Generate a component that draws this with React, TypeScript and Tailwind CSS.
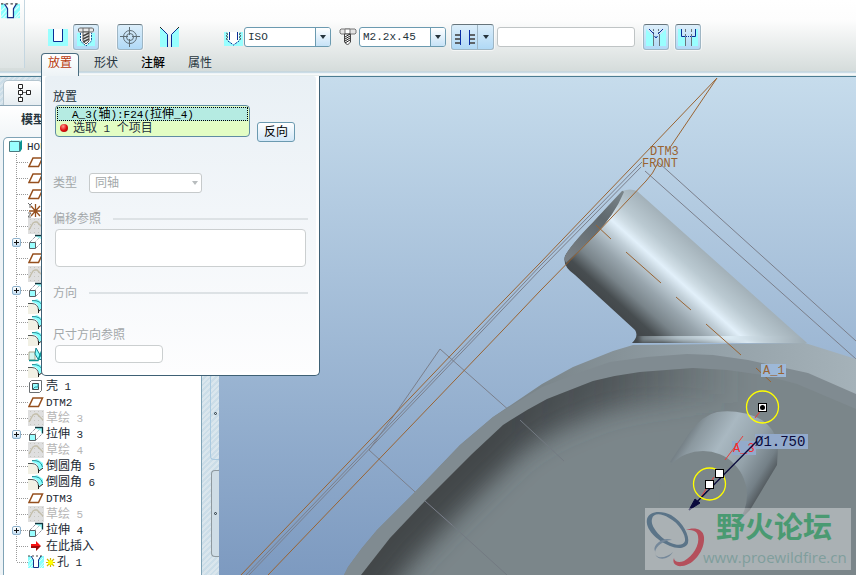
import type { ReactNode } from 'react';

type IconName = 'datum' | 'csys' | 'sketch' | 'extrude' | 'round' | 'draft' | 'shell' | 'insert' | 'hole';

type TreeItem = {
  icon: IconName;
  label?: string;
  expandable?: boolean;
  dimmed?: boolean;
  isNew?: boolean;
};

const treeItems: TreeItem[] = [
  { icon: 'datum' },
  { icon: 'datum' },
  { icon: 'datum' },
  { icon: 'csys' },
  { icon: 'sketch' },
  { icon: 'extrude', expandable: true },
  { icon: 'datum' },
  { icon: 'sketch' },
  { icon: 'extrude', expandable: true },
  { icon: 'round' },
  { icon: 'round' },
  { icon: 'round' },
  { icon: 'draft' },
  { icon: 'round' },
  { icon: 'shell', label: '壳 1' },
  { icon: 'datum', label: 'DTM2' },
  { icon: 'sketch', label: '草绘 3', dimmed: true },
  { icon: 'extrude', label: '拉伸 3', expandable: true },
  { icon: 'sketch', label: '草绘 4', dimmed: true },
  { icon: 'round', label: '倒圆角 5' },
  { icon: 'round', label: '倒圆角 6' },
  { icon: 'datum', label: 'DTM3' },
  { icon: 'sketch', label: '草绘 5', dimmed: true },
  { icon: 'extrude', label: '拉伸 4', expandable: true },
  { icon: 'insert', label: '在此插入' },
  { icon: 'hole', label: '孔 1', isNew: true },
];

const treeIcons: Record<IconName, ReactNode> = {
  datum: <path d="M5 4h9.500l-4 8.500H1z" fill="#fff" stroke="#96501e" strokeWidth="1.500" />,
  csys: (
    <>
      <path d="M7.500 2v13M1 9h14M3 4l9 10M12 4L3 14" stroke="#96501e" strokeWidth="1.300" />
      <path d="M0 1l2 2 2-2M2 3v3M0 11h3l-3 4h3" fill="none" stroke="#6b6b6b" />
    </>
  ),
  sketch: (
    <>
      <path d="M0 0h16v16H0z" fill="#dfdfdf" />
      <path d="M2 1.500h14M2 6.500h14M2 10.500h14M2 14.500h14" stroke="#c6c6c0" strokeDasharray="1 3" />
      <path d="M1 12l4-7 2-1h2l3 3 3 3" fill="none" stroke="#c2bda9" strokeWidth="1.300" />
    </>
  ),
  extrude: (
    <>
      <path d="M7 2h7v7l-1-4-4-2z" fill="#9ff" />
      <path d="M2 8L8 2M8 14l6-6" stroke="#667" strokeDasharray="1 1" />
      <path d="M7 1.500h7.500v6" fill="none" stroke="#12343c" strokeWidth="1.300" />
      <path d="M6 9l7-7" stroke="#9aa" strokeDasharray="1 1" />
      <path d="M1.500 8.500h6v6h-6z" fill="#9ff" stroke="#586064" />
    </>
  ),
  round: (
    <>
      <path d="M0 6h4l5 3 2 7H0z" fill="#f1f0e4" />
      <path d="M4 3l5-2 6 4v5l-4 2-2-6-5-2z" fill="#8ff" />
      <path d="M4 2.500Q13 2 14.500 9" fill="none" stroke="#2a8c96" />
      <path d="M0 5.500h4Q10 6 10.500 12" fill="none" stroke="#4f5555" />
      <path d="M10.500 11v4M11 13l4-3" stroke="#222" />
    </>
  ),
  draft: (
    <>
      <path d="M1 6h6v8H1z" fill="#d4f5ef" stroke="#aaa68d" />
      <path d="M8 2l7 12-5-1-3-5z" fill="#8ff" stroke="#17808c" />
      <path d="M1 14.500h9L14 4" fill="none" stroke="#0a9191" strokeWidth="1.400" />
    </>
  ),
  shell: (
    <>
      <path d="M1.500 4.500l2-2h10v10l-2 2h-10z" fill="#fff" stroke="#6a6f72" />
      <path d="M4.500 5.500h6v6h-6z" fill="#9ff" stroke="#43484b" />
      <path d="M5 11l2-2h3V6" fill="none" stroke="#2a9aa6" />
    </>
  ),
  insert: (
    <>
      <path d="M3 6h5V3l5 5H3z" fill="#f81414" />
      <path d="M3 8h10l-5 5v-3H3z" fill="#a00808" />
    </>
  ),
  hole: <HoleShape />,
};

function HoleShape() {
  return (
    <>
      <path d="M0 2h16v12H0z" fill="#8ff" />
      <path d="M0 8l5-5M0 13l5-6M2 14l3-3M11 14l5-6M11 8l4-4M13 14l3-3" stroke="#d8ffff" />
      <path d="M3 2h10l-3 4v8H6V6z" fill="#fff" />
      <path d="M3 2l2.500 4v7.500h5V6L13 2" fill="none" stroke="#1b2f86" />
      <path d="M0 2h16" stroke="#444" strokeDasharray="2 2" />
    </>
  );
}

/* Latin runs use a smaller fixed-width face than the Chinese ones */
function Mixed({ text }: { text: string }) {
  const runs = text.match(/[\u4e00-\u9fff]+|[^\u4e00-\u9fff]+/g) ?? [];
  return (
    <span className="whitespace-pre">
      {runs.map((run, index) =>
        /[\u4e00-\u9fff]/.test(run) ? (
          <span key={index}>{run}</span>
        ) : (
          <span key={index} className="font-['Liberation_Mono',monospace] text-[11px]">{run}</span>
        )
      )}
    </span>
  );
}

function ToolButton({ label, children }: { label: string; children: ReactNode }) {
  return (
    <button
      aria-label={label}
      className="flex size-[26px] items-center justify-center rounded-[3px] border border-[#9fb6c4] border-t-[#66747b] bg-linear-to-b from-[#dceefa] to-[#b0d9f6] shadow-[0_0_0_1px_#ffffff90]"
    >
      {children}
    </button>
  );
}

function StandardSelect({ label, value }: { label: string; value: string }) {
  return (
    <div className="relative h-5 w-[87px]">
      <select
        aria-label={label}
        className="block h-5 w-full appearance-none rounded-[3px] border border-[#6b9ab0] bg-white pr-4 pl-[3px] font-['Liberation_Mono',monospace] text-[11px] text-[#26343d]"
      >
        <option>{value}</option>
      </select>
      <span className="pointer-events-none absolute inset-y-px right-px flex w-[15px] items-center justify-center rounded-r-[2px] border-l border-[#6b9ab0] bg-linear-to-b from-white to-[#c6e2f7]">
        <Caret />
      </span>
    </div>
  );
}

function Caret({ color = '#26343d' }: { color?: string }) {
  return (
    <svg width="6" height="4" viewBox="0 0 6 4">
      <path d="M0 0h6L3 4z" fill={color} />
    </svg>
  );
}

function Header() {
  return (
    <header className="flex h-[76px] bg-[linear-gradient(#fff_0,#fdfdfd_20px,#d5dcdb_71px,#b9d1df_72px,#fff_74px,#dfe8e8_76px)]">
      <div className="h-[68px] w-[25px] border-r border-[#c4d6e0] bg-linear-to-b from-white to-[#dee4e4]">
        <svg width="19" height="18" viewBox="0 1 16 14" className="mt-[2px] ml-px">
          <HoleShape />
        </svg>
      </div>
      <div className="flex min-w-0 flex-1 flex-col justify-between">
        <div className="flex items-center pt-6 pl-[23px]">
          <button aria-label="简单孔">
            <svg width="20" height="17" viewBox="0 0 20 17">
              <path d="M0 0h20v17H0z" fill="#9ff" />
              <path d="M6 0h9v12H6z" fill="#fff" />
              <path d="M5.500 0v12.500h9V0" fill="none" stroke="#0a2f96" />
            </svg>
          </button>
          <div className="ml-[5px] flex gap-[18px]">
            <ToolButton label="标准孔">
              <svg width="20" height="20" viewBox="0 0 20 20">
                <path d="M1 6h18v13H1z" fill="#9ff" />
                <path d="M4.500 6v8l5.500 5 5.500-5V6" fill="#fff" stroke="#0a4f96" strokeDasharray="2 1" />
                <path d="M2.500 2l1-1h13l1 1v2l-1 1h-13l-1-1zM7 1v4M13 1v4" fill="#e8e8e8" stroke="#666" />
                <path d="M7 5h6v9l-3 3-3-3z" fill="#eee" stroke="#555" />
                <path d="M7 9l6-3M7 12l6-3M7 15l6-3" stroke="#444" strokeWidth="1.400" />
              </svg>
            </ToolButton>
            <ToolButton label="添加攻丝">
              <svg width="20" height="20" viewBox="0 0 20 20" fill="none" stroke="#5e6d75">
                <circle cx="10" cy="10" r="6.500" />
                <circle cx="10" cy="10" r="3.500" />
                <path d="M9.500 0v8M9.500 12v8M0 9.500h8M12 9.500h8" />
              </svg>
            </ToolButton>
          </div>
          <button aria-label="埋头孔" className="ml-[17px]">
            <svg width="19" height="20" viewBox="0 0 19 20">
              <path d="M0 0v20h8V8zM19 0v20h-8V8z" fill="#9ff" />
              <path d="M0 0l7.500 7.500V20M19 0l-7.500 7.500V20" fill="none" stroke="#0a2f96" />
              <path d="M0 0l2 2M17 2l2-2" stroke="#222" />
            </svg>
          </button>
          <svg width="19" height="14" viewBox="0 0 19 14" className="mt-1 ml-[45px]">
            <path d="M0 0h19v14H0z" fill="#9ff" />
            <path d="M4 0h11v8l-5 5-6-5z" fill="#fff" />
            <path d="M5.500 0v8M13.500 0v8" stroke="#0a2f96" />
            <path d="M4 9l5.500 4L15 9" fill="none" stroke="#0a2f96" strokeDasharray="2 1" />
            <path d="M2 1l2 1-2 2 2 1-2 2 2 1M17 1l-2 1 2 2-2 1 2 2-2 1" fill="none" stroke="#53636a" />
          </svg>
          <div className="ml-px flex items-center gap-2">
            <StandardSelect label="螺纹类型" value="ISO" />
            <svg width="18" height="18" viewBox="0 0 18 18" className="-mr-1.5">
              <path d="M1 2l1-1h14l1 1v3l-1 1H2L1 5z" fill="#e4e4e4" stroke="#777" />
              <path d="M6 1h5v5H6z" fill="#fff" stroke="#777" />
              <path d="M5.500 6h6v8l-3 3-3-3z" fill="#fff" stroke="#444" />
              <path d="M6 9l5-3M6 11l5-3M6 13l5-3M6 15l5-3" stroke="#222" />
            </svg>
            <StandardSelect label="螺钉尺寸" value="M2.2x.45" />
          </div>
          <button
            aria-label="深度选项"
            className="ml-[5px] flex h-[26px] w-[43px] items-stretch rounded-[3px] border border-[#9fb6c4] border-t-[#66747b] bg-linear-to-b from-[#dceefa] to-[#b0d9f6] shadow-[0_0_0_1px_#ffffff90]"
          >
            <span className="flex flex-1 items-center justify-center">
              <svg width="20" height="17" viewBox="0 0 20 17">
                <path d="M0 6h5M0 10h5M0 14h5M15 6h5M15 10h5M15 14h5" stroke="#5e6468" strokeWidth="2" />
                <path d="M5.500 1v15M14.500 1v15" stroke="#0a2fa6" />
              </svg>
            </span>
            <span className="flex w-4 items-center justify-center border-l border-[#9fb6c4]">
              <Caret />
            </span>
          </button>
          <input aria-label="深度" className="ml-[3px] h-5 w-[138px] rounded-[3px] border border-[#bfc4c5] bg-white px-1 text-xs" />
          <div className="ml-2 flex gap-1.5">
            <ToolButton label="添加埋头孔">
              <svg width="20" height="17" viewBox="0 0 20 17">
                <path d="M0 0v17h7V7zM20 0v17h-7V7z" fill="#9ff" />
                <path d="M3 0l5 5M17 0l-5 5M8.500 7l1.500 2 1.500-2" fill="none" stroke="#0a2f96" />
                <path d="M7.500 5v12M13.500 5v12" stroke="#68757b" />
                <path d="M7.500 0v4M12.500 0v4" stroke="#68757b" strokeDasharray="2 1" />
              </svg>
            </ToolButton>
            <ToolButton label="添加沉孔">
              <svg width="20" height="17" viewBox="0 0 20 17">
                <path d="M0 0v17h7V8H3V0zM20 0v17h-7V8h4V0z" fill="#9ff" />
                <path d="M3.500 0v7.500h4M17.500 0v7.500h-4" fill="none" stroke="#0a2f96" />
                <path d="M8 7.500h5" stroke="#0a2f96" strokeDasharray="1 1" />
                <path d="M7.500 8v9M13.500 8v9" stroke="#68757b" />
                <path d="M7.500 0v7M13.500 0v7" stroke="#68757b" strokeDasharray="3 2" />
              </svg>
            </ToolButton>
          </div>
        </div>
        <nav className="ml-4 flex h-[23px] items-stretch text-xs text-[#26343d]">
          <button className="w-[38px] rounded-t-[4px] border border-b-0 border-[#4b6d80] bg-linear-to-b from-white to-[#edf3f6] pb-1 text-[#b83a0c]">放置</button>
          <button className="ml-[11px] px-1 pb-1">形状</button>
          <button className="ml-[15px] px-1 pb-1 font-medium text-black">注解</button>
          <button className="ml-[15px] px-1 pb-1">属性</button>
        </nav>
      </div>
    </header>
  );
}

function TreeRow({ item, last }: { item: TreeItem; last: boolean }) {
  return (
    <li className="flex h-4 items-center">
      <span className="relative ml-2 h-4 w-4">
        <svg width="16" height="16" viewBox="0 0 16 16">
          <path d={last ? 'M4.500 0v8' : 'M4.500 0v16'} stroke="#9a9a9a" strokeDasharray="1 1" />
          <path d="M5 8.500h11" stroke="#9a9a9a" strokeDasharray="1 1" />
        </svg>
        {item.expandable && (
          <button
            aria-label="展开"
            className="absolute top-1 left-0 flex size-[9px] items-center justify-center rounded-[2px] border border-[#8fb2cc] bg-linear-to-b from-white to-[#c6e0f4]"
          >
            <svg width="5" height="5" viewBox="0 0 5 5">
              <path d="M0 2.500h5M2.500 0v5" stroke="#111" />
            </svg>
          </button>
        )}
      </span>
      <svg width="16" height="16" viewBox="0 0 16 16">
        {treeIcons[item.icon]}
      </svg>
      {item.isNew && (
        <svg width="9" height="9" viewBox="0 0 9 9" className="ml-0.5">
          <path d="M4.500 0v9M0 4.500h9M1 1l7 7M8 1L1 8" stroke="#d0b800" strokeWidth="1.200" />
          <circle cx="4.500" cy="4.500" r="2.500" fill="#ff0" />
        </svg>
      )}
      {item.label && (
        <span className={item.dimmed ? 'ml-0.5 text-[#b5b5b5]' : 'ml-0.5 text-[#1c2a33]'}>
          <Mixed text={item.label} />
        </span>
      )}
    </li>
  );
}

function Sidebar() {
  return (
    <aside className="flex w-[219px] shrink-0 bg-[repeating-linear-gradient(135deg,#cbdde8_0_2px,#dae6ed_2px_4px)]">
      <div className="flex w-[202px] flex-col">
        <div className="flex h-[29px] items-end border-b border-[#8ba5b5] pl-[3px]">
          <button aria-label="模型树" className="flex h-[25px] w-[40px] items-center rounded-t-[5px] border border-b-0 border-[#b4c5cf] bg-linear-to-b from-white to-[#e6edf1] pl-[14px]">
            <svg width="14" height="20" viewBox="0 0 14 20" fill="#fff" stroke="#222">
              <path d="M2.500 5v10M4 9.500h5" stroke="#666" />
              <path d="M.5 1.500h4v4h-4zM.5 7.500h4v4h-4zM.5 14.500h4v4h-4zM8.500 7.500h4v4h-4z" />
            </svg>
          </button>
        </div>
        <div className="flex min-h-0 flex-1 flex-col bg-linear-to-b from-white to-[#eef3f6] to-[40px] pl-[3px]">
          <h2 className="h-[31px] pt-1.5 pl-[18px] text-xs leading-4 font-bold text-[#26343d]">模型</h2>
          <div className="min-h-0 flex-1 overflow-hidden rounded-tl-[5px] border border-b-0 border-[#7fa3b6] bg-white text-xs">
            <div className="flex h-4 items-center pl-[5px]">
              <svg width="14" height="14" viewBox="0 0 14 14">
                <path d="M1 3l2-2h10v9l-2 3z" fill="#0a9191" />
                <path d="M1 3l2-2h10l-2 2z" fill="#c8ffff" />
                <path d="M.5 2.500h10v10H.5z" fill="#9ff" stroke="#4a7a80" />
              </svg>
              <span className="ml-1 text-[#1c2a33]">
                <Mixed text="HOU" />
              </span>
            </div>
            <ul>
              {treeItems.map((item, index) => (
                <TreeRow key={index} item={item} last={index === treeItems.length - 1} />
              ))}
            </ul>
          </div>
        </div>
      </div>
      {/* Sash between the tree and the viewport */}
      <div className="flex flex-1 flex-col items-end gap-[10px] pb-[18px]">
        <div className="flex w-[9px] flex-[4] items-end justify-center rounded-bl-[4px] border-b border-l border-[#a9c9df] pb-11">
          <span className="size-[3px] rounded-full border border-[#26343d]" />
        </div>
        <div className="flex w-2 flex-1 items-center justify-center rounded-l-[4px] border border-r-0 border-[#8e999f] bg-[#cfdde6]">
          <span className="size-[3px] rounded-full border border-[#26343d]" />
        </div>
      </div>
    </aside>
  );
}

function PlacementPanel() {
  return (
    <section className="absolute -top-px left-[41px] w-[279px] rounded-b-[5px] border border-t-0 border-[#3e6075] bg-white px-[3px] pb-[3px] text-xs text-[#26343d]">
      <div className="rounded-[3px] bg-linear-to-b from-[#e9f0f5] to-[#fdfdfe] px-2 pt-[13px] pb-[9px]">
        <h3 className="h-4 leading-4">放置</h3>
        <div className="flex items-start gap-[7px] pl-0.5">
          <ul className="w-[195px] rounded-[4px] border border-[#5f8ca3] bg-[#e3fdc4] p-px">
            <li className="flex h-[14px] items-center border border-dotted border-black bg-[#b5ebe2] pl-[14px] text-black">
              <Mixed text="A_3(轴):F24(拉伸_4)" />
            </li>
            <li className="flex h-[14px] items-center gap-[5px] pl-[3px]">
              <span className="size-2 rounded-full bg-radial-[at_40%_30%] from-[#ff9c8c] via-[#e01010] to-[#8c0606]" />
              <Mixed text="选取 1 个项目" />
            </li>
          </ul>
          <button className="mt-[17px] h-5 w-[38px] rounded-[3px] border border-[#6b9ab0] bg-linear-to-b from-white to-[#d3e8f8] text-black">反向</button>
        </div>
        <div className="mt-[31px] flex h-5 items-center text-[#a3a8aa]">
          <label htmlFor="hole-type" className="w-9">类型</label>
          <div className="relative">
            <select
              id="hole-type"
              disabled
              className="block h-5 w-[113px] appearance-none rounded-[3px] border border-[#c6cacb] bg-white pl-[5px] text-[#a3a8aa]"
            >
              <option>同轴</option>
            </select>
            <span className="pointer-events-none absolute inset-y-0 right-1 flex items-center">
              <Caret color="#b8bcbe" />
            </span>
          </div>
        </div>
        <label htmlFor="offset-refs" className="mt-[17px] flex h-[18px] items-center gap-3 text-[#a3a8aa]">
          偏移参照
          <span className="h-0.5 flex-1 bg-[#dde2e5]" />
        </label>
        <div className="mt-px px-0.5">
          <textarea id="offset-refs" disabled className="block h-[38px] w-full resize-none rounded-[4px] border border-[#cbcfd0] bg-white" />
        </div>
        <div className="mt-[17px] flex h-[18px] items-center gap-3 text-[#a3a8aa]">
          方向
          <span className="h-0.5 flex-1 bg-[#dde2e5]" />
        </div>
        <label htmlFor="dim-refs" className="mt-6 flex h-[18px] items-center text-[#a3a8aa]">尺寸方向参照</label>
        <div className="mt-px pl-0.5">
          <input id="dim-refs" disabled className="block h-[18px] w-[108px] rounded-[4px] border border-[#cbcfd0] bg-white px-1" />
        </div>
      </div>
    </section>
  );
}

const innerEdge =
  'M361 575L390 538L425 501L472 454L503 425Q524 411 547 399L593 381Q616 375 640 372L693 368L727 370L763 375L797 384L856 409';
const bossBody =
  'M670 462L690 432Q703 415 717 412Q740 409 760 419Q776 428 778 447L777 465L750 510L743 517Z';

function Viewport() {
  return (
    <div className="min-w-0 flex-1 bg-linear-to-b from-[#c6dcec] to-[#7d9ac0]">
      <svg className="block h-full w-full" viewBox="219 77 637 498" preserveAspectRatio="xMinYMin slice" fill="none">
        <defs>
          <linearGradient id="pipe" gradientUnits="userSpaceOnUse" x1="700" y1="248" x2="631" y2="325">
            <stop offset="0" stopColor="#a3b1b9" />
            <stop offset=".2" stopColor="#bac9d1" />
            <stop offset=".3" stopColor="#cfdde5" />
            <stop offset=".37" stopColor="#e2f0fa" />
            <stop offset=".47" stopColor="#c0ced7" />
            <stop offset=".62" stopColor="#98a5ad" />
            <stop offset=".78" stopColor="#79848a" />
            <stop offset=".92" stopColor="#474d50" />
            <stop offset="1" stopColor="#43484b" />
          </linearGradient>
          <linearGradient id="fillet" gradientUnits="userSpaceOnUse" x1="636" y1="0" x2="806" y2="0">
            <stop offset="0" stopColor="#6d777c" />
            <stop offset=".25" stopColor="#b4c3cb" />
            <stop offset=".55" stopColor="#deedf6" />
            <stop offset="1" stopColor="#9caab2" />
          </linearGradient>
          <linearGradient id="shoulder" gradientUnits="userSpaceOnUse" x1="540" y1="0" x2="856" y2="0">
            <stop offset="0" stopColor="#7b868b" />
            <stop offset=".5" stopColor="#929fa6" />
            <stop offset="1" stopColor="#a5b2b9" />
          </linearGradient>
          <linearGradient id="boss" gradientUnits="userSpaceOnUse" x1="678" y1="436" x2="768" y2="492">
            <stop offset="0" stopColor="#626b70" />
            <stop offset=".15" stopColor="#8b989f" />
            <stop offset=".38" stopColor="#a9b8c1" />
            <stop offset=".65" stopColor="#94a2aa" />
            <stop offset=".85" stopColor="#748087" />
            <stop offset="1" stopColor="#42474a" />
          </linearGradient>
          <linearGradient id="shade" gradientUnits="userSpaceOnUse" x1="500" y1="0" x2="740" y2="0">
            <stop offset="0" stopColor="#42474a" />
            <stop offset=".45" stopColor="#42474a" stopOpacity=".75" />
            <stop offset="1" stopColor="#42474a" stopOpacity="0" />
          </linearGradient>
          <linearGradient id="capShade" gradientUnits="userSpaceOnUse" x1="626" y1="192" x2="570" y2="260">
            <stop offset="0" stopColor="#7c878c" />
            <stop offset=".4" stopColor="#5f686d" />
            <stop offset="1" stopColor="#787f84" />
          </linearGradient>
          <filter id="soft" x="-20%" y="-20%" width="140%" height="140%">
            <feGaussianBlur stdDeviation="12" />
          </filter>
          <filter id="soft2">
            <feGaussianBlur stdDeviation="2" />
          </filter>
          <clipPath id="inside">
            <path d={innerEdge + 'V575Z'} />
          </clipPath>
          <clipPath id="pipeClip">
            <path d="M622 191Q630 188 637 191L807 343H632Q639 336 635 330L575 275Q562 266 565 256Q570 246 593 222Z" />
          </clipPath>
        </defs>

        {/* Reference planes behind the part */}
        <g stroke="#7b7f8b">
          <path d="M642 162L540 266L480 330L246 575M641 167L540 270L483 330L249 575" />
          <path d="M658 162L856 341M645 171L856 359" />
          <path d="M369 450L395 414L440 349L520 420M369 450L425 501" />
        </g>

        {/* Housing */}
        <path
          d="M344 575L348 567Q361 548 377 530L415 492L460 445L493 417L542 384L573 367L613 351L633 345L805 343L856 359V575Z"
          fill="url(#shoulder)"
        />
        <path
          d="M344 575L348 567Q361 548 377 530L415 492L460 445L493 417L542 387L573 375L610 362L647 357L687 354L713 355L748 360L808 373L856 394V575Z"
          fill="#808b91"
        />
        <path d={innerEdge + 'V575Z'} fill="#7b868a" />
        <g clipPath="url(#inside)">
          <path d={'M320 620L361 575' + innerEdge.slice(8)} stroke="url(#shade)" strokeWidth="66" filter="url(#soft)" />
        </g>
        <path d="M425 501L452 525" stroke="#7b7f8b" />
        <path d="M452 525L507 575M520 420L564 461" stroke="#737a82" />

        {/* Angled pipe */}
        <g clipPath="url(#pipeClip)">
          <path d="M550 180h270v170H550z" fill="url(#pipe)" />
          <path d="M622 190Q607 205 593 222Q569 245 564 258L566 263Q574 255 594 236Q614 216 624 192Z" fill="url(#capShade)" />
          <path d="M640 338Q720 334 808 342" stroke="url(#fillet)" strokeWidth="8" filter="url(#soft2)" />
        </g>

        {/* Inner boss */}
        <path d={bossBody} fill="url(#boss)" />
        <circle cx="703" cy="495" r="44" fill="#7b868a" />

        {/* Datum outlines and axis */}
        <g stroke="#9a6432">
          <path d="M717 78L653 145L540 263L475 330L241 575" />
          <path d="M717 78L671 146M658 163Q653 174 646 181L595 235L540 291L503 330L268 575" />
          <path d="M596 225L611 239M626 252L661 283M676 297L691 310M706 324L741 355M756 368L771 382" />
        </g>
        <g fill="#9a6432" fontFamily="'Liberation Mono', monospace" fontSize="12">
          <text x="650" y="155">DTM3</text>
          <text x="642" y="167">FRONT</text>
          <rect x="761" y="364" width="25" height="13" fill="#9db8d8" />
          <text x="763" y="374">A_1</text>
        </g>

        {/* Hole preview */}
        <rect x="732" y="441" width="24" height="14" fill="#93aacb" />
        <rect x="755" y="434" width="53" height="15" fill="#93aacb" />
        <path d="M725 460L743 436M755 418L762 409M701 497L714 477" stroke="#e83c3c" />
        <text x="733" y="452" fill="#f22b2b" fontFamily="'Liberation Mono', monospace" fontSize="12">A_3</text>
        <path d="M757 441L689 510" stroke="#0a0a3c" strokeWidth="1.300" />
        <path d="M689 510L695 499L700 503ZM699 500L707 491" fill="#0a0a3c" stroke="#0a0a3c" />
        <text x="755" y="446" fill="#0a0a3c" fontFamily="'Liberation Mono', monospace" fontSize="14">Ø1.750</text>
        <g stroke="#ff0" strokeWidth="1.300">
          <circle cx="762.500" cy="407" r="16" />
          <circle cx="709.500" cy="484" r="16" />
        </g>
        <g fill="#fff" stroke="#000" shapeRendering="crispEdges">
          <rect x="715.500" y="469.500" width="8" height="8" />
          <rect x="705.500" y="480.500" width="8" height="8" />
          <rect x="758.500" y="403.500" width="8" height="8" />
        </g>
        <circle cx="762.500" cy="407.500" r="2.500" fill="#000" />

        {/* Forum watermark */}
        <rect x="645" y="508" width="206" height="62" fill="#fff" fillOpacity=".36" />
        <g fillRule="evenodd">
          <path
            d="M647 519C649 511 661 510 671 515C683 522 690 536 688 543C686 549 677 549 670 546C656 540 645 529 647 519ZM652 519C650 526 660 538 671 543C678 546 684 545 685 541C686 535 679 523 669 518C661 513 653 513 652 519Z"
            fill="#5b7488"
          />
          <path
            d="M686 530C693 527 703 528 704 537C705 550 694 565 682 566C675 567 672 562 674 558C674 562 679 563 684 561C693 556 700 545 698 536C697 530 691 530 686 530Z"
            fill="#b4505c"
          />
          <path
            d="M672 540C664 540 656 546 655 552C655 560 667 558 673 552C667 562 654 560 655 551C652 545 664 536 672 540Z"
            fill="#75889a"
          />
        </g>
        <text x="716" y="538" fill="#4a9a72" fontFamily="'Noto Sans CJK SC', sans-serif" fontWeight="700" fontSize="29">野火论坛</text>
        <text x="703" y="563" fill="#7f9e9c" fontFamily="'Open Sans', sans-serif" fontSize="15">www.proewildfire.cn</text>
      </svg>
    </div>
  );
}

export default function App() {
  return (
    <div className="flex h-screen flex-col overflow-hidden bg-white font-['Liberation_Sans','Noto_Sans_CJK_SC',sans-serif]">
      <Header />
      <main className="relative flex min-h-0 flex-1 border-t border-[#4b7c92]">
        <Sidebar />
        <Viewport />
        <PlacementPanel />
      </main>
    </div>
  );
}
